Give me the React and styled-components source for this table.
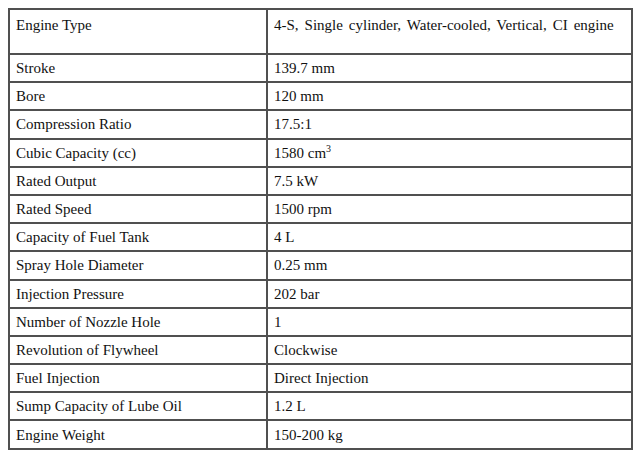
import styled, { createGlobalStyle } from 'styled-components';

const GlobalStyle = createGlobalStyle`
  html, body {
    margin: 0;
    padding: 0;
    background: #ffffff;
  }
`;

const Page = styled.div`
  padding: 8px 0 0 8px;
  font-family: 'Liberation Serif', 'Times New Roman', serif;
  color: #111;
`;

const Table = styled.table`
  width: 625px;
  border-collapse: collapse;
  border: 2px solid #444;
  table-layout: fixed;
  font-size: 15px;
`;

const Row = styled.tr`
  height: ${({ tall }) => (tall ? '45px' : '28.2px')};
`;

const Cell = styled.td`
  border: 2px solid #505050;
  padding: ${({ tall }) => (tall ? '6px 6px 0 6px' : '0 6px')};
  vertical-align: ${({ tall }) => (tall ? 'top' : 'middle')};
  word-spacing: ${({ spread }) => (spread ? '2.2px' : 'normal')};
  line-height: 18px;
  white-space: nowrap;
`;

const Sup = styled.sup`
  font-size: 10px;
  line-height: 0;
`;

const specs = [
  ['Stroke', '139.7 mm'],
  ['Bore', '120 mm'],
  ['Compression Ratio', '17.5:1'],
  ['Cubic Capacity (cc)', <>1580 cm<Sup>3</Sup></>],
  ['Rated Output', '7.5 kW'],
  ['Rated Speed', '1500 rpm'],
  ['Capacity of Fuel Tank', '4 L'],
  ['Spray Hole Diameter', '0.25 mm'],
  ['Injection Pressure', '202 bar'],
  ['Number of Nozzle Hole', '1'],
  ['Revolution of Flywheel', 'Clockwise'],
  ['Fuel Injection', 'Direct Injection'],
  ['Sump Capacity of Lube Oil', '1.2 L'],
  ['Engine Weight', '150-200 kg'],
];

const App = () => {
  return (
    <Page>
      <GlobalStyle />
      <Table>
        <colgroup>
          <col style={{ width: '258px' }} />
          <col />
        </colgroup>
        <tbody>
          <Row tall>
            <Cell tall>Engine Type</Cell>
            <Cell tall spread>
              4-S, Single cylinder, Water-cooled, Vertical, CI engine
            </Cell>
          </Row>
          {specs.map(([label, value]) => (
            <Row key={label}>
              <Cell>{label}</Cell>
              <Cell>{value}</Cell>
            </Row>
          ))}
        </tbody>
      </Table>
    </Page>
  );
};

export default App;
